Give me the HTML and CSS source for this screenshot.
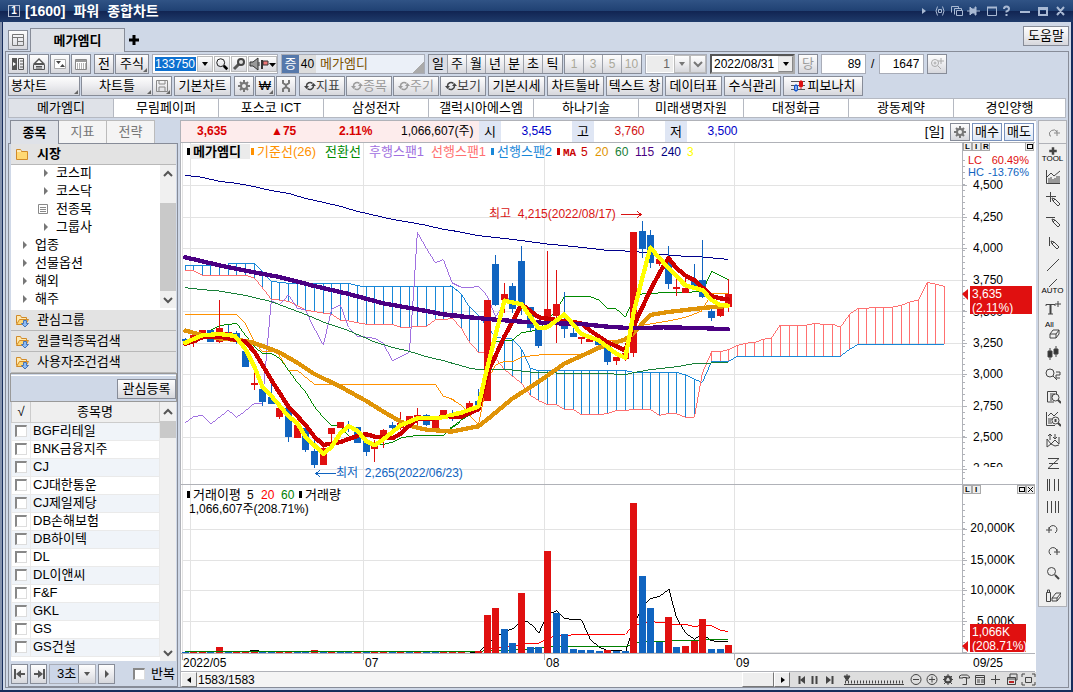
FILE: index.html
```html
<!DOCTYPE html>
<html lang="ko">
<head>
<meta charset="utf-8">
<title>[1600] 파워 종합차트</title>
<link rel="stylesheet" href="styles.css">
</head>
<body>
<svg class="defs" aria-hidden="true">
  <symbol id="gear" viewBox="0 0 14 14"><path d="M7 1v12M1 7h12M3 3l8 8M11 3l-8 8" stroke="currentColor" stroke-width="2"/><circle cx="7" cy="7" r="4" fill="currentColor"/><circle cx="7" cy="7" r="2" fill="#eee"/></symbol>
  <symbol id="cycle" viewBox="0 0 12 12"><path d="M2.500 6a3.500 3.500 0 0 1 6-2.500M9.500 6a3.500 3.500 0 0 1-6 2.500" fill="none" stroke="currentColor" stroke-width="1.500"/><path d="M0 6h5l-2.500 3zM7 6h5l-2.500-3z" fill="currentColor"/></symbol>
  <symbol id="folder" viewBox="0 0 14 14"><path d="M1.500 12.500v-10h4l1 2h6v8z" fill="#ffd873" stroke="#d18a28"/><path d="M2 4h4" stroke="#fff"/></symbol>
  <symbol id="folder-down" viewBox="0 0 14 14"><path d="M1.500 10.500v-8h4l1 2h5v3" fill="#ffe9b0" stroke="#d18a28"/><path d="M1.500 11.500l3-5h9l-3 5z" fill="#ffd873" stroke="#d18a28"/><path d="M8.500 7.500h3v3h2l-3.500 3.500-3.500-3.500h2z" fill="#8cbcf5" stroke="#4774b8"/></symbol>
  <symbol id="up" viewBox="0 0 10 10"><path d="M1 7l4-4 4 4" fill="none" stroke="currentColor" stroke-width="2"/></symbol>
  <symbol id="down" viewBox="0 0 10 10"><path d="M1 3l4 4 4-4" fill="none" stroke="currentColor" stroke-width="2"/></symbol>
  <symbol id="caret" viewBox="0 0 8 6"><path d="M1 1h6L4 5z" fill="currentColor"/></symbol>
  <symbol id="lens" viewBox="0 0 16 16"><circle cx="6.500" cy="6.500" r="4.500" fill="none" stroke="currentColor"/><path d="M10 10l4 4" stroke="currentColor" stroke-width="3"/></symbol>
</svg>
<div class="window">
  <header class="title">
    <span class="num">1</span><h1><span>[1600]</span> <span>파워</span> <span>종합차트</span></h1>
    <div class="caption">
      <svg width="152" height="16" viewBox="0 0 152 16" fill="none" stroke="#a9b9d3"><path d="M4 5l4 3-4 3z" fill="#a9b9d3" stroke="none"/><path d="M19.500 3.500q-3 4.500 0 9M24.500 3.500q3 4.500 0 9M20.500 6.500h3v3h-3z"/><path d="M33.500 9.500v-6h7v2M36.500 11.500v-6h7v2M38.500 7.500h6v5h-6z"/><path d="M52 4v8l2-2h3v2h1V4h-1v2h-3z" fill="#a9b9d3"/><path d="M49 8h3M58 8h4"/><path d="M69 4.500h10" stroke-width="2"/><path d="M69.500 5v7.500h9V5"/><path d="M86 6q0-2.500 2.500-2.500t2.500 2.500q0 1.500-2.500 2.500v1M88.500 11v2" stroke-width="2"/><path d="M102 9h10M121 5h8v7h-8zM121 6h8M139 4l7 8M146 4l-7 8" stroke-width="2"/></svg>
    </div>
  </header>
  <nav class="docs">
    <button class="btn sq" aria-label="화면 분할"><svg width="14" height="14" viewBox="0 0 14 14" fill="none" stroke="#777"><path d="M1.500 1.500h11v11h-11zM2 4.500h10M6.500 4v8M7 8.500h5"/></svg></button>
    <button class="doc">메가엠디</button>
    <button class="add" aria-label="추가"><svg width="10" height="10" viewBox="0 0 10 10"><path d="M5 0v10M0 5h10" stroke="#000" stroke-width="3"/></svg></button>
    <button class="btn help">도움말</button>
  </nav>
  <div class="work">
    <div class="bar">
      <div class="set">
        <button class="btn sq" aria-label="목록"><svg width="14" height="14" viewBox="0 0 14 14"><path d="M1 1h5v12H1z" fill="#555"/><path d="M2 5l3 2-3 2z" fill="#fff"/><path d="M7.500 1.500h5v11h-5zM9 4h3M9 7h3M9 10h3" fill="none" stroke="#555"/></svg></button>
        <button class="btn sq" aria-label="위로"><svg width="14" height="14" viewBox="0 0 14 14"><path d="M1 7l6-6 6 6z" fill="#555"/><path d="M4 6l3-3 3 3z" fill="#fff"/><path d="M1.500 7.500h11v5h-11zM4 9.500h6M4 11h6" fill="none" stroke="#555"/></svg></button>
        <button class="btn sq" aria-label="축소"><svg width="14" height="14" viewBox="0 0 14 14"><path d="M1.500 2.500h11v9h-11z" fill="#fff" stroke="#aaa"/><path d="M3 4h5L5.500 7zM7 10h5L9.500 7z" fill="#444"/></svg></button>
        <button class="btn sq" aria-label="표"><svg width="14" height="14" viewBox="0 0 14 14"><path d="M1.500 2.500h11v10h-11z" fill="#fff" stroke="#888"/><path d="M2 4h10" stroke="#999" stroke-width="2"/><path d="M3 7h9M3 9h9M3 11h9" stroke="#666" stroke-dasharray="1 1"/></svg></button>
      </div>
      <div class="set"><button class="btn sq">전</button><button class="btn w34 corner">주식</button></div>
      <div class="search">
        <input class="code" value="133750" aria-label="종목코드">
        <button class="btn mini" aria-label="펼치기"><svg width="8" height="6"><use href="#caret"/></svg></button>
        <button class="btn mini" aria-label="검색"><svg width="14" height="14"><use href="#lens"/></svg></button>
        <button class="btn mini" aria-label="도구"><svg width="14" height="14" viewBox="0 0 14 14"><path d="M2 12l5-5" stroke="#555" stroke-width="3"/><circle cx="9" cy="5" r="3" fill="#ddd" stroke="#444" stroke-width="2"/></svg></button>
        <button class="btn speak" aria-label="소리"><svg width="28" height="14" viewBox="0 0 28 14"><path d="M1 5h3l5-4v12l-5-4H1z" fill="#999" stroke="#333"/><path d="M10 5v4" stroke="#333"/><path d="M13 3v9" stroke="#333" stroke-width="2"/><path d="M14 4h5v4h-5z" fill="#e77" stroke="#333"/><path d="M20 6h7l-3.500 4z" fill="#000"/></svg></button>
      </div>
      <div class="stock"><b>증</b><i>40</i><span>메가엠디</span></div>
      <div class="join period"><button class="on">일</button><button>주</button><button>월</button><button>년</button><button>분</button><button>초</button><button>틱</button></div>
      <div class="join off"><button disabled>1</button><button disabled>3</button><button disabled>5</button><button disabled>10</button></div>
      <div class="unit"><input value="1" aria-label="단위" disabled><button class="btn" aria-label="단위 선택" disabled><svg width="8" height="6"><use href="#caret"/></svg></button><button class="btn" aria-label="더보기"><svg width="10" height="10"><use href="#down"/></svg></button></div>
      <div class="date"><select aria-label="날짜"><option>2022/08/31</option></select><span><svg width="8" height="6"><use href="#caret"/></svg></span></div>
      <button class="btn sq dim" disabled>당</button>
      <div class="count"><input value="89" aria-label="표시 봉수"><span>/</span><input value="1647" aria-label="전체 봉수"></div>
      <button class="btn sq dim" aria-label="확대"><svg width="14" height="14" viewBox="0 0 14 14" fill="none" stroke="#aaa"><circle cx="5" cy="6" r="3.500"/><circle cx="5" cy="6" r="1"/><path d="M8 9l3 3M11 1v6M8 4h6"/></svg></button>
    </div>
    <div class="bar two">
      <button class="btn w72 corner left">봉차트</button>
      <div class="pair"><button class="btn w72 corner">차트틀</button><button class="btn sq corner" aria-label="저장"><svg width="14" height="14" viewBox="0 0 14 14" fill="none" stroke="#888"><path d="M1.500 1.500h11v11h-11zM4 1v4h6v-4M4 13v-5h6v5"/></svg></button></div>
      <button class="btn w57">기본차트</button>
      <div class="set gap"><button class="btn sq" aria-label="설정"><svg class="gray" width="14" height="14"><use href="#gear"/></svg></button>
      <button class="btn sq corner">₩</button>
      <button class="btn sq" aria-label="공구"><svg width="12" height="14" viewBox="0 0 12 14" fill="none" stroke="#777" stroke-width="2"><path d="M3 1v3l3 2 3-2V1M3 13v-3l3-2 3 2v3M6 5v4"/></svg></button></div>
      <div class="set gap"><button class="btn w46"><svg width="12" height="12"><use href="#cycle"/></svg>지표</button>
      <button class="btn w46 dim"><svg width="12" height="12"><use href="#cycle"/></svg>종목</button>
      <button class="btn w46 dim"><svg width="12" height="12"><use href="#cycle"/></svg>주기</button>
      <button class="btn w46"><svg width="12" height="12"><use href="#cycle"/></svg>보기</button></div>
      <button class="btn w57">기본시세</button><button class="btn w57">차트툴바</button><button class="btn w57">텍스트 창</button><button class="btn w57">데이터표</button><button class="btn w57">수식관리</button>
      <button class="btn w80"><svg width="14" height="14" viewBox="0 0 14 14" fill="none"><path d="M0 2.500h14M0 6.500h14M0 10.500h14" stroke="#555"/><path d="M5 5v8M3.500 6.500h3v5h-3z" stroke="#15c" fill="#fff"/><path d="M10 1v9M8.500 2.500h3v5h-3z" stroke="#d11" fill="#d11"/></svg>피보나치</button>
    </div>
    <nav class="stocks"><button class="on">메가엠디</button><button>무림페이퍼</button><button>포스코 ICT</button><button>삼성전자</button><button>갤럭시아에스엠</button><button>하나기술</button><button>미래생명자원</button><button>대정화금</button><button>광동제약</button><button>경인양행</button></nav>
    <main class="main">
      <aside class="side">
        <nav class="tabs"><button class="on">종목</button><button>지표</button><button>전략</button></nav>
        <div class="panel">
          <button class="fold top"><svg width="14" height="14"><use href="#folder"/></svg>시장</button>
          <div class="tree">
            <ul>
              <li class="sub">코스피</li><li class="sub">코스닥</li><li class="sub page"><svg width="10" height="10" viewBox="0 0 10 10" fill="none" stroke="#888"><path d="M.5.5h9v9h-9zM2 3.500h6M2 5.500h6M2 7.500h6"/></svg>전종목</li><li class="sub">그룹사</li>
              <li>업종</li><li>선물옵션</li><li>해외</li><li>해주</li>
            </ul>
            <div class="scroll tall"><svg width="10" height="10"><use href="#up"/></svg><span></span><svg width="10" height="10"><use href="#down"/></svg></div>
          </div>
          <button class="fold"><svg width="14" height="14"><use href="#folder-down"/></svg>관심그룹</button>
          <button class="fold"><svg width="14" height="14"><use href="#folder-down"/></svg>원클릭종목검색</button>
          <button class="fold"><svg width="14" height="14"><use href="#folder-down"/></svg>사용자조건검색</button>
          <div class="reg"><button class="btn">관심등록</button></div>
          <div class="list">
            <table>
              <thead><tr><th class="ck">√</th><th>종목명</th></tr></thead>
              <tbody>
                <tr><td><input type="checkbox" id="s1"></td><td><label for="s1">BGF리테일</label></td></tr>
                <tr><td><input type="checkbox" id="s2"></td><td><label for="s2">BNK금융지주</label></td></tr>
                <tr><td><input type="checkbox" id="s3"></td><td><label for="s3">CJ</label></td></tr>
                <tr><td><input type="checkbox" id="s4"></td><td><label for="s4">CJ대한통운</label></td></tr>
                <tr><td><input type="checkbox" id="s5"></td><td><label for="s5">CJ제일제당</label></td></tr>
                <tr><td><input type="checkbox" id="s6"></td><td><label for="s6">DB손해보험</label></td></tr>
                <tr><td><input type="checkbox" id="s7"></td><td><label for="s7">DB하이텍</label></td></tr>
                <tr><td><input type="checkbox" id="s8"></td><td><label for="s8">DL</label></td></tr>
                <tr><td><input type="checkbox" id="s9"></td><td><label for="s9">DL이앤씨</label></td></tr>
                <tr><td><input type="checkbox" id="s10"></td><td><label for="s10">F&amp;F</label></td></tr>
                <tr><td><input type="checkbox" id="s11"></td><td><label for="s11">GKL</label></td></tr>
                <tr><td><input type="checkbox" id="s12"></td><td><label for="s12">GS</label></td></tr>
                <tr><td><input type="checkbox" id="s13"></td><td><label for="s13">GS건설</label></td></tr>
              </tbody>
            </table>
            <div class="scroll short"><svg width="10" height="10"><use href="#up"/></svg><span></span><svg width="10" height="10"><use href="#down"/></svg></div>
          </div>
          <div class="play">
            <button class="btn" aria-label="처음"><svg width="12" height="10" viewBox="0 0 12 10"><path d="M1 0v10M5 5h6" stroke="#555" stroke-width="2"/><path d="M2 5l5-4v8z" fill="#555"/></svg></button>
            <button class="btn" aria-label="끝"><svg width="12" height="10" viewBox="0 0 12 10"><path d="M11 0v10M1 5h6" stroke="#555" stroke-width="2"/><path d="M10 5L5 1v8z" fill="#555"/></svg></button>
            <div class="sec"><select aria-label="간격"><option>3초</option></select><span class="btn"><svg width="8" height="6"><use href="#caret"/></svg></span></div>
            <button class="btn next" aria-label="재생"><svg width="6" height="8" viewBox="0 0 6 8"><path d="M1 0l4 4-4 4z" fill="#555"/></svg></button>
            <label class="rep"><input type="checkbox">반복</label>
          </div>
        </div>
      </aside>
      <section class="chart">
        <div class="quote">
          <div class="pink"><b>3,635</b><b>▲75</b><b>2.11%</b><span>1,066,607(주)</span></div>
          <em>시</em><span class="val blue">3,545</span><em>고</em><span class="val red">3,760</span><em>저</em><span class="val blue">3,500</span>
          <div class="trade"><span>[일]</span><button class="btn sq gray" aria-label="차트 설정"><svg width="14" height="14"><use href="#gear"/></svg></button><button class="btn deal">매수</button><button class="btn deal">매도</button></div>
        </div>
        <svg class="plot" viewBox="181 142 854 530" preserveAspectRatio="xMinYMin meet" role="img" aria-label="메가엠디 일봉 차트">
          <g class="crisp" fill="none">
            <path class="grid" d="M182 185.500h780M182 217.500h780M182 248.500h780M182 280.500h780M182 311.500h780M182 343.500h780M182 374.500h780M182 406.500h780M182 437.500h780M182 469.500h780M182 529.500h780M182 560.500h780M182 590.500h780M182 621.500h780M182 652.500h780M182.500 143v510M190.500 143v510M363.500 143v510M544.500 143v510M734.500 143v510"/>
            <path class="axis" d="M181 142.500h854M181 484.500h854M181 653.500h854M181 671.500h854M962.500 142v511M182.500 654v6M363.500 654v6M544.500 654v6M734.500 654v6"/>
            <path class="axis" d="M963 185.500h4M963 217.500h4M963 248.500h4M963 280.500h4M963 311.500h4M963 343.500h4M963 374.500h4M963 406.500h4M963 437.500h4M963 469.500h4M963 529.500h4M963 560.500h4M963 590.500h4M963 621.500h4M963 652.500h4"/>
            <path class="axis ticks" stroke-width="2" d="M964 160v320M964 504v148"/>
          </g>
          <g transform="translate(180 140) scale(.333333)" class="thin">
            <path class="s2" d="M16 377V391M41 377V392M67 377V406M92 377V406M118 377V406M145 370V406M170 370V406M196 370V406M223 370V414M247 395V443M274 424V478M298 427V480M325 430V484M352 430V497M376 430V510M403 430V515M430 430V519M455 430V523M481 430V540M506 430V543M532 437V548M559 440V553M584 440V553M610 440V553M637 440V553M662 440V562M688 440V562M712 440V559M739 440V559M766 440V540M790 440V538M817 440V536"/>
            <path class="s2" d="M16 377H145V370H223L247 395 274 424 325 430H506L532 437 559 440H817L840 458"/>
            <path class="s1" d="M16 391L41 392 67 406H196L223 414 247 443 274 478 298 480 325 484 352 497 376 510 430 519 455 523 481 540 506 543 559 553H637L662 562H688L712 559H739L766 540 817 536 840 560"/>
            <path class="lag" d="M16 848L41 830 67 826 92 852 118 832 145 811 170 832 196 813 223 790 247 792 260 640 274 481 298 495 325 465 352 504 376 510 403 565 430 615 455 508 481 495 506 562 532 588 584 595 610 610 637 663 688 637 702 440 712 277 739 325 766 368 790 359 817 430 840 440"/>
            <path class="base" d="M16 523H170L196 550 223 605 247 634H290L325 691H352L403 733H766L790 769 817 777 840 794"/>
            <path class="conv" d="M92 570L118 557 170 550 196 585 223 620 247 640H274L300 656 325 690 352 727 376 755 403 800 430 832 455 856 481 857 506 888 532 889 559 905 584 915 610 913 637 907 664 893 712 886H790L817 862 840 848"/>
            <path class="m60" d="M16 443L67 449 118 453 196 466 274 485 325 504 376 523 430 546 506 572 584 606 637 622 688 634 739 650 790 662 840 676"/>
            <path class="m240" d="M16 106L67 112 118 124 170 130 223 140 274 152 325 160 376 175 430 187 481 199 532 214 584 226 637 238 690 247 739 256 790 268 840 276"/>
            <path class="rw" d="M41 575V620M118 480V610M223 690V750M298 795V838M430 905V975M455 864V910M584 900V966M610 868V925M662 816V870M712 804V860M766 840V867"/>
            <path class="rb" d="M41 585V610M67 570V592M118 564V605M145 576V592M223 730V735M298 804V831M352 856V894M430 924V975M455 864V882M481 846V864M584 915V927M610 870V900M662 850V865M688 828V850M712 825V835M766 840V864M790 810V835"/>
            <path class="bw" d="M16 594V606M145 556V590M170 572V612M196 620V681M247 740V798M274 725V792M325 800V906M376 864V936M403 897V984M506 843V875M559 900V948M637 846V875M739 822V858M817 810V842"/>
            <path class="bb" d="M16 597V603M92 569V605M170 580V605M196 633V681M247 747V786M274 770V792M325 804V891M376 864V930M403 933V975M506 860V866M532 861V909M559 900V936M637 855V864M739 825V856M817 820V830"/>
          </g>
          <g transform="translate(450 140) scale(.333333)" class="thin">
            <path class="s2" d="M8 440V536M34 463V565M58 500V606M85 525V636M163 597V688M187 597V708M215 628V730M241 685V766M266 692V782M292 692V794M319 692V794M343 692V808M370 692V808M394 692V824M420 692V824M446 692V824M472 692V821M499 692V812M526 692V812M550 697V808M578 697V808M601 697V808M628 697V826M655 697V821M680 697V821M707 705V832M733 718V832"/>
            <path class="s1" d="M785 664V635M812 664V634M836 664V629"/>
            <path class="s2" d="M0 437L8 440 34 463 58 500 85 525 112 562 137 590 163 597H187L215 628 241 685 266 692H526L550 697H680L707 705 733 718 757 727 785 664H836"/>
            <path class="s1" d="M0 533L8 536 34 565 58 606 85 636 112 640 137 655 163 688 187 708 215 730 241 766 266 782 292 794H319L343 808H370L394 824H446L472 821 499 812H526L550 808H601L628 826 655 821H680L707 832H733L757 700 785 635"/>
            <path class="lag" d="M0 415L8 428 34 442 58 444 85 438 112 468 137 530 163 490 187 465"/>
            <path class="base" d="M0 775L34 796 85 855 112 720 137 675 163 664H190L215 651 266 645 400 643 472 602H520L550 570 578 553 601 552 655 543 707 532 755 513 785 460H834"/>
            <path class="conv" d="M0 865L34 840 85 810 112 640 137 604 187 600 215 578 266 570 319 510 343 470H421L446 480 472 505 499 507 526 531 550 480 578 460 670 458 757 455 785 394 834 418"/>
            <path class="m60" d="M0 668L58 684 85 689 187 690 240 696 342 700 472 701 526 704 550 698 601 689 680 680 733 671 785 669 834 667"/>
            <path class="m240" d="M0 270L85 287 187 298 292 312 394 322 472 331 550 334 628 343 707 349 757 351 834 358"/>
            <path class="rw" d="M58 783V810M163 429V520M292 333V560M319 390V609M394 590V612M499 650V675M526 640V662M550 276V651M628 357V378M680 414V467M707 415V459M812 495V531M836 417V516"/>
            <path class="rb" d="M34 812V830M58 789V810M112 480V783M163 462V480M292 507V545M319 492V528M394 591V597M420 597V606M499 651V663M526 640V657M550 276V639M628 357V372M680 441V446M707 444V459M812 505V528M836 462V501"/>
            <path class="bw" d="M8 810V842M85 747V800M137 345V498M187 429V520M215 318V525M241 500V573M266 560V624M343 456V594M370 565V591M472 610V675M578 243V354M601 270V384M655 318V447M733 372V440M757 300V474M785 505V543"/>
            <path class="bb" d="M85 783V796M137 372V495M187 438V507M215 363V495M241 500V564M266 560V618M343 540V567M370 579V591M446 595V615M472 610V666M578 273V327M601 285V369M655 360V432M733 420V440M757 420V471M785 513V534"/>
          </g>
          <g transform="translate(690 230) scale(.333333)" class="thin">
            <path class="s1" d="M142 379V346M166 379V340M193 379V337M220 379V328M244 379V324M271 379V286M298 379V287M322 379V287M349 379V287M373 379V280M400 379V283M427 379V283M451 379V292M479 357V252M505 343V235M529 343V235M556 343V234M580 343V233M607 343V232M634 343V226M658 343V216M685 343V210M712 343V157M736 343V163M763 343V169"/>
            <path class="s1" d="M64 364H95L118 358 142 346 166 340 195 337 220 328 245 324 270 286H348L374 280 400 283H430L451 292 480 252 505 235 605 232 635 226 660 216 685 210 712 157 740 163 763 169"/>
            <path class="s2" d="M115 394L142 379H451L480 357 505 343H763"/>
          </g>
          <g class="thick">
            <g transform="translate(180 140) scale(.333333)">
              <path class="m20" d="M16 572L67 585 118 595 200 603 240 615 298 637 352 668 403 702 481 740 559 783 610 815 662 845 700 860 739 869 780 872 810 874"/>
              <path class="m5" d="M16 612L67 592 118 590 196 605 223 635 250 680 274 720 325 800 376 854 403 890 430 915 481 906 506 897 540 885 560 883 584 890 637 895 664 880 690 855 712 838 766 835 840 822"/>
              <path class="m3" d="M16 608L67 586 118 582 165 588 196 627 223 680 247 740 274 768 325 828 352 850 376 890 430 942 455 920 481 880 506 858 532 872 559 904 584 916 610 898 662 856 712 835 766 835 800 830 840 818"/>
              <path class="m115" d="M16 352L118 376 196 392 298 411 403 438 506 462 610 490 712 508 790 523 840 528"/>
            </g>
            <g transform="translate(450 140) scale(.333333)">
              <path class="m20" d="M0 876L85 859 112 838 187 776 266 725 343 671 446 624 526 598 550 580 601 525 655 516 757 504 830 498"/>
              <path class="m5" d="M0 830H34L85 808 112 700 163 590 215 493 266 532 320 540 394 550 421 572 472 606 526 632 550 560 601 450 628 400 655 354 680 385 707 407 733 420 785 468 810 475 834 478"/>
              <path class="m115" d="M0 526L112 537 215 545 292 549 394 552 472 560 550 565 640 562 750 564 834 568"/>
              <path class="m3" d="M0 826L34 818 85 800 110 690 163 482 215 493 266 565 292 562 343 523 394 582 446 601 500 642 526 653 540 580 550 522 578 410 601 323 655 384 707 437 757 450 785 480 810 495 834 497"/>
            </g>
          </g>
          <g transform="translate(180 480) scale(.333333)" class="thin">
            <path class="rb" d="M41 514V519M67 514V519M118 501V519M170 514V519M196 514V519M223 514V519M298 514V519M325 514V519M403 510V519M455 514V519M532 515V519M584 515V519M610 514V519M662 514V519M712 514V519M790 514V519M817 514V519M844 514V519"/>
            <path class="bb" d="M16 516V519M92 515V519M145 515V519M247 515V519M274 515V519M352 515V519M376 515V519M430 515V519M481 515V519M506 515V519M559 515V519M637 515V519M688 515V519M739 515V519M766 515V519"/>
            <path stroke="#008000" d="M16 515H870"/><path stroke="#000" d="M210 511H237"/>
          </g>
          <g transform="translate(470 480) scale(.333333)" class="thin">
            <path stroke="#000" d="M0 518L28 515 52 490 90 463 103 455 127 447 154 425 172 424 185 435 207 458 232 405 259 392 283 414 300 418 334 419 361 478 388 502 412 511 455 513 467 515 490 440 505 405 530 367 541 356 568 349 597 328 619 412 646 458 673 478 697 462 724 482 751 485H773"/>
            <path stroke="#f00" d="M52 507L85 502 142 497 160 490H205L232 475 259 467 283 466 348 463H466L490 437 517 431 541 425 580 428 610 433 650 434 673 440 697 436 724 437 751 450 773 455"/>
            <path stroke="#008000" d="M0 515L60 512 127 511 181 506 215 504 259 499H470L490 491 517 486 568 485 600 481 700 480 773 478"/>
            <path class="rb" d="M25 514V519M52 405V519M76 384V519M154 339V519M232 213V519M412 510V519M490 69V519M595 411V519M646 498V519M673 483V519M697 417V519M775 495V519"/>
            <path class="bb" d="M103 447V519M127 489V519M181 501V519M205 501V519M259 399V519M283 462V519M310 507V519M334 510V519M361 510V519M388 513V519M439 513V519M466 514V519M517 288V519M541 384V519M568 486V519M619 501V519M724 507V519M751 507V519"/>
          </g>
          <g class="ko">
            <rect x="190" y="144" width="60" height="15" fill="#ebebeb"/><rect x="187" y="148" width="3" height="7"/><text x="193" y="156" font-weight="700">메가엠디</text>
            <g fill="#ff9100"><rect x="251" y="148" width="3" height="7"/><text x="257" y="156">기준선(26)</text></g>
            <text x="325" y="156" fill="#008a00">전환선</text><text x="369" y="156" fill="#a070e0">후행스팬1</text><text x="431" y="156" fill="#ff7070">선행스팬1</text>
            <g fill="#1887d8"><rect x="491" y="148" width="3" height="7"/><text x="497" y="156">선행스팬2</text></g>
            <rect x="187" y="491" width="3" height="7"/><text x="193" y="499">거래이평</text><rect x="299" y="491" width="3" height="7"/><text x="305" y="499">거래량</text>
          </g>
          <g class="en">
            <g fill="#c80000"><rect x="557" y="148" width="3" height="7"/><text x="563" y="156" class="ma">MA</text><text x="581" y="156">5</text></g>
            <text x="595" y="156" fill="#e09400">20</text><text x="615" y="156" fill="#188038">60</text><text x="635" y="156" fill="#4b0082">115</text><text x="661" y="156" fill="#000080">240</text><text x="687" y="156" fill="#ff0">3</text>
            <text x="247" y="499">5</text><text x="261" y="499" fill="#f00">20</text><text x="281" y="499" fill="#008000">60</text>
            <text x="189" y="513">1,066,607주(208.71%)</text>
            <text x="489" y="218" fill="#d81313">최고&#160; 4,215(2022/08/17)</text>
            <text x="336" y="477" fill="#1064c0">최저&#160; 2,265(2022/06/23)</text>
            <text x="183" y="667">2022/05</text><text x="365" y="667">07</text><text x="546" y="667">08</text><text x="736" y="667">09</text><text x="973" y="667">09/25</text>
            <text x="968" y="164" class="pct" fill="#e01010">LC</text><text x="968" y="176" class="pct" fill="#1064c0">HC</text><text x="1029" y="164" class="pct" fill="#e01010" text-anchor="end">60.49%</text><text x="1029" y="176" class="pct" fill="#1064c0" text-anchor="end">-13.76%</text>
            <text x="973" y="189">4,500</text><text x="973" y="221">4,250</text><text x="973" y="252">4,000</text><text x="973" y="284">3,750</text><text x="973" y="316">3,500</text><text x="973" y="347">3,250</text><text x="973" y="378">3,000</text><text x="973" y="410">2,750</text><text x="973" y="441">2,500</text><text x="973" y="472">2,250</text>
            <rect x="969" y="467" width="60" height="8" fill="#fff"/>
            <text x="1015" y="532" text-anchor="end">20,000K</text><text x="1015" y="564" text-anchor="end">15,000K</text><text x="1015" y="594" text-anchor="end">10,000K</text><text x="1015" y="625" text-anchor="end">5,000K</text>
            <rect x="970" y="286" width="62" height="28" fill="#e01010"/><rect x="970" y="624" width="56" height="28" fill="#e01010"/><path d="M962 294l6-5v11zM962 646l6-5v11z" fill="#e01010"/>
            <g fill="#fff"><text x="972" y="298">3,635</text><text x="972" y="312">(2.11%)</text><text x="972" y="636">1,066K</text><text x="972" y="650">(208.71%)</text></g>
          </g>
          <g fill="none" class="crisp"><path stroke="#d81313" d="M621 214.500h20M637 211l4 3.500-4 3.500"/><path stroke="#1064c0" d="M316 473.500h20M320 470l-4 3.500 4 3.500"/></g>
          <g class="corner-keys"><path d="M963.500 142.500h8v8h-8zM972.500 142.500h8v8h-8zM981.500 142.500h8v8h-8zM1025.500 142.500h8v8h-8zM963.500 485.500h8v8h-8zM972.500 485.500h8v8h-8zM1017.500 485.500h8v8h-8zM1026.500 485.500h8v8h-8z" fill="#eee" stroke="#aaa"/><text x="965" y="149">L</text><text x="975" y="149">I</text><text x="983" y="149">R</text><text x="965" y="492">L</text><text x="975" y="492">I</text><path d="M1027.500 144.500h5v4h-5zM1019.500 487.500h5v4h-5zM1028 487l5 5M1033 487l-5 5" fill="none" stroke="#000"/></g>
        </svg>
        <div class="foot">
          <button class="key" aria-label="왼쪽"><svg width="5" height="6" viewBox="0 0 5 6"><path d="M4 0v6L0 3z"/></svg></button><span>1583/1583</span>
          <button class="key thumb" aria-label="이동"></button><button class="key" aria-label="오른쪽"><svg width="5" height="6" viewBox="0 0 5 6"><path d="M1 0v6l4-3z"/></svg></button>
          <svg class="tools" width="246" height="15" viewBox="789 672 246 15" fill="none" stroke="#444">
            <path d="M798.500 676v8M811.500 676v8M815.500 676v8M831.500 676v8" stroke-width="2"/><path d="M804 676v8l-5-4zM825 676v8l5-4z" fill="#444" stroke="none"/>
            <path d="M843 684.500h60M846 674v3"/><path d="M844 682h58" stroke-width="3" stroke-dasharray="1 2"/><path d="M843 676h6l-3 5z" fill="#444"/>
            <circle cx="915" cy="679.500" r="5"/><path d="M912 679.500h6"/><circle cx="931" cy="679.500" r="5"/><path d="M928 679.500h6M931 676.500v6"/>
            <circle cx="947" cy="679.500" r="3" stroke-width="2"/><path d="M947 674v11M942 679.500h10M943 676l8 8M951 676l-8 8"/><circle cx="947" cy="679.500" r="1.500" fill="#ddd" stroke="none"/>
            <path d="M958.500 678v-2l2-1h6l2 2v1h-4M961.500 677.500h4v7h-4M958 678h4"/><path d="M974.500 675.500h9v9h-9zM974 677.500h10M976 680h3M980 680h3M976 682h3M980 682h3"/><path d="M994.500 675v9M990 679.500h9"/><path d="M1009 677v-3h7v6h-2M1006.500 677.500h8v7h-8zM1007 679h7"/><path d="M1008 682h5" stroke="#b22" stroke-width="2"/>
            <path d="M1024.500 677.500h6v5h-6zM1021 677v-3h3M1031 674h3v3M1034 682v3h-3M1024 685h-3v-3"/>
          </svg>
        </div>
      </section>
      <nav class="draw">
        <button aria-label="다시"><svg viewBox="0 0 16 16"><path d="M6 12H5a4 4 0 1 1 7-4M9 9h6M12 6v6" stroke="#888"/></svg></button>
        <button class="txt"><svg width="8" height="6" viewBox="0 0 8 6"><path d="M4 0v6M1 3h6" stroke-width="2"/></svg>TOOL</button>
        <button aria-label="지표"><svg viewBox="0 0 16 16"><path d="M1.500 1v13.500H15M2 8l4-4 3 3 6-5M4 14V9M6 14V8M8 14v-4M10 14V9M12 14V7M14 14V7"/></svg></button>
        <button aria-label="십자선"><svg viewBox="0 0 16 16"><path d="M5.500 1v10M1 5.500h10M7 7l3 1 5 5-2 2-5-5zM8 10l2-2"/></svg></button>
        <button aria-label="수평선"><svg viewBox="0 0 16 16"><path d="M1 4.500h9M7 6l3 1 5 5-2 2-5-5zM8 9l2-2"/></svg></button>
        <button aria-label="수직선"><svg viewBox="0 0 16 16"><path d="M4.500 2v9M6 6l3 1 5 5-2 2-5-5zM7 9l2-2"/></svg></button>
        <button aria-label="추세선"><svg viewBox="0 0 16 16"><path d="M2 14L14 2"/></svg></button>
        <button class="txt"><svg width="10" height="8" viewBox="0 0 10 8"><path d="M1 8l8-8"/></svg>AUTO</button>
        <button aria-label="문자"><svg viewBox="0 0 16 16"><path d="M1 5V3.500h9V5M3 13h5"/><path d="M5.500 3v10" stroke-width="2"/><path d="M13 0v6M10 3h6"/></svg></button>
        <button class="all" aria-label="모두 지우기"><small>All</small><svg viewBox="0 0 16 16"><path d="M5 11l3-4h6l-3 4zM5 11v4h6v-4M11 15l3-4V7"/></svg></button>
        <button aria-label="봉"><svg viewBox="0 0 16 16"><path d="M5 3v12M11 1v11"/><path d="M3 6h4v6H3zM9 4h4v5H9z" fill="#333"/></svg></button>
        <button aria-label="찾기"><svg viewBox="0 0 16 16"><circle cx="5" cy="6" r="4"/><path d="M8 9l4 4M11 5h4v3h-4v3h4"/></svg></button>
        <button aria-label="문서 찾기"><svg viewBox="0 0 16 16"><path d="M9 13H2.500V2.500h9V5M5 5h5M5 7h3M5 9h2M5 11h2"/><circle cx="10.500" cy="8.500" r="3.500"/><path d="M13 11l3 3" stroke-width="2"/></svg></button>
        <button aria-label="차트 찾기"><svg viewBox="0 0 16 16"><path d="M1.500 1v13.500H10M3 5l3-3 3 3 4-4M3 8h4M3 10h3M3 12h4"/><circle cx="10.500" cy="9.500" r="3.500"/><path d="M10.500 8v3M13 12l3 3" stroke-width="2"/></svg></button>
        <button aria-label="패턴"><svg viewBox="0 0 16 16"><path d="M2 14V6l4 5 4-4 4 4V4M2 14l4-3 4 2 4-1M5 7V1M3 3l2-2 2 2M10 1v5M8 4l2 2 2-2"/></svg></button>
        <button aria-label="지그재그"><svg viewBox="0 0 16 16"><path d="M3 3.500h11L3 13.500h11M4 8.500h9"/></svg></button>
        <button aria-label="시간선"><svg viewBox="0 0 16 16"><path d="M2.500 2v12M4.500 2v12M9.500 2v12M13.500 2v12"/></svg></button>
        <button aria-label="등간격선"><svg viewBox="0 0 16 16"><path d="M2.500 2v12M6.500 2v12M10.500 2v12M13.500 2v12"/></svg></button>
        <button aria-label="되돌리기"><svg viewBox="0 0 16 16"><path d="M10 12a4 4 0 1 0-6-4M1 9h6M4 6v6"/></svg></button>
        <button aria-label="다시 실행"><svg viewBox="0 0 16 16"><path d="M6 12a4 4 0 1 1 6-4M9 9h6M12 6v6"/></svg></button>
        <button aria-label="확대"><svg viewBox="0 0 16 16"><circle cx="6.500" cy="6.500" r="4"/><path d="M10 10l4 4" stroke-width="2"/></svg></button>
        <button aria-label="지우개"><svg viewBox="0 0 16 16"><path d="M1.500 5.500h4v9h-4zM2.500 5V3h2v2M7 11l4-5h5l-4 5zM7 11v3h5v-3M12 14l4-5V6"/></svg></button>
      </nav>
    </main>
  </div>
</div>
</body>
</html>
```
FILE: styles.css
```css
* { box-sizing: border-box; }
body { margin: 0; font: 13px/16px "Liberation Sans", "Noto Sans CJK KR", sans-serif; color: #000; background: #cfd8e7; }
button, input, select { font: inherit; color: inherit; margin: 0; padding: 0; border-radius: 0; }
button { display: flex; align-items: center; justify-content: center; white-space: nowrap; border: 0; background: none; }
svg { display: block; flex: none; }
.defs { position: absolute; width: 0; height: 0; }
.window { display: flex; flex-direction: column; height: 100vh; min-height: 692px; padding: 0 4px 2px 5px; border-bottom: 2px solid #172d5c; box-shadow: inset 2px 0 #8794ae, inset 3px 0 #172d5c, inset -2px 0 #172d5c; }

.title { display: flex; align-items: center; flex: none; height: 22px; margin: 0 -4px 0 -5px; padding: 0 3px 0 8px; gap: 5px; color: #fff; background: linear-gradient(#305385, #204173 50%, #112452 50%, #1f3b6b); }
.title h1 { display: flex; gap: 8px; margin: 0; font-size: 14px; font-weight: 700; }
.num { width: 12px; height: 12px; border: 1px solid #b5c0d4; font-size: 10px; line-height: 10px; font-weight: 700; text-align: center; }
.caption { margin-left: auto; }

.btn { position: relative; flex: none; height: 20px; border: 1px solid #878c98; background: linear-gradient(#fdfdfd, #ececef 50%, #d6d7dc); }
.sq { width: 20px; }
.dim { color: #9b9b9b; }
.gray { color: #777; }
.btn.corner::after { content: ""; position: absolute; right: 1px; bottom: 1px; border: 2px solid #666; border-top-color: transparent; border-left-color: transparent; }
.w34 { width: 34px; }
.w46 { width: 46px; color: #444; }
.w46.dim { color: #9b9b9b; }
.w57 { width: 57px; }
.w72 { width: 72px; }
.w80 { width: 80px; gap: 3px; }
.left { justify-content: flex-start; padding-left: 2px; }

.docs { display: flex; align-items: center; flex: none; height: 29px; padding: 6px 0 0 3px; }
.doc { align-self: stretch; width: 95px; margin: 0 0 -1px 2px; border: 1px solid #878c98; border-bottom: 0; background: #dfe2e8; font-weight: 700; z-index: 1; }
.add { width: 18px; height: 20px; }
.help { width: 46px; margin: -7px 0 0 auto; }

.work { display: flex; flex-direction: column; flex: 1; gap: 2px; min-height: 0; padding: 2px 1px 0 2px; border: 1px solid #878c98; }
.bar { display: flex; flex: none; height: 20px; gap: 3px; font-size: 13px; }
.bar.two { gap: 2px; }
.set { display: flex; gap: 1px; }
.pair { display: flex; margin-left: -1px; }
.pair .sq { margin-left: -1px; }
.set.gap { gap: 1px; margin-left: 1px; }
.search { display: flex; align-items: center; width: 126px; padding: 0 1px; border: 1px solid #a9adb8; background: #fff; font-size: 12px; }
.code { flex: none; width: 41px; height: 14px; margin: 0 1px; border: 0; background: #0d70d0; color: #fff; }
.mini { width: 16px; height: 16px; margin-right: 1px; border-color: #bbb; }
.speak { width: 29px; height: 16px; border-color: #bbb; }
.stock { display: flex; width: 144px; border: 1px solid #a9adb8; background: linear-gradient(135deg, #ebf0f8 93%, #aaa 93%); color: #7c5200; line-height: 18px; font-size: 13px; }
.stock b { width: 17px; color: #fff; background: #5578ab; font-weight: 400; text-align: center; }
.stock i { width: 17px; color: #000; background: #ddd; font-style: normal; font-size: 12px; text-align: center; }
.stock span { padding-left: 4px; }
.join { display: flex; border: 1px solid #878c98; }
.join button { width: 19px; border-right: 1px solid #9da1aa; background: linear-gradient(#fdfdfd, #ececef 50%, #d6d7dc); }
.join button:last-child { border-right: 0; }
.join .on { background: #dadde5; }
.join.off { margin-left: -2px; }
.join.off button { width: 19px; color: #aaa89a; font-size: 12px; }
.unit { display: flex; width: 62px; border: 1px solid #a9adb8; background: #fff; font-size: 12px; }
.unit input { flex: 1; min-width: 0; margin: 1px; padding-right: 3px; border: 0; background: #ececec; color: #666; text-align: right; }
.unit .btn { width: 16px; height: 18px; border-color: #bbb; color: #777; }
.date { position: relative; width: 85px; border: 2px inset #aaa; background: #fff; font-size: 12px; }
.date select, .sec select { width: 100%; height: 16px; padding-left: 2px; border: 0; appearance: none; background: none; }
.date span { position: absolute; right: 0; top: 0; display: grid; place-items: center; width: 15px; height: 16px; border: 1px outset #ddd; background: #eee; pointer-events: none; }
.count { display: flex; gap: 5px; line-height: 20px; font-size: 12px; }
.count input { width: 45px; padding-right: 4px; border: 1px solid #a9adb8; background: #fff; text-align: right; }

.stocks { display: grid; grid-template-columns: repeat(9, 105fr) 111fr; flex: none; height: 20px; margin-right: 1px; border: 1px solid #b5b9c2; background: #fff; }
.stocks button { border-right: 1px solid #b5b9c2; }
.stocks button:last-child { border-right: 0; }
.stocks .on { background: #dfe2e8; }

.main { display: grid; grid-template-columns: 170px 1fr 29px; grid-template-rows: minmax(0, 1fr); flex: 1; gap: 2px; min-height: 0; }
.side, .chart, .panel { display: flex; flex-direction: column; min-width: 0; min-height: 0; }
.tabs { display: flex; flex: none; height: 23px; padding-left: 2px; }
.tabs button { width: 48px; border: 1px solid #bbb; border-bottom: 0; border-left: 0; background: #f4f4f4; color: #777; }
.tabs .on { width: 49px; margin-bottom: -1px; border: 1px solid #878c98; border-bottom: 0; background: #dfe2e8; color: #000; font-weight: 700; z-index: 1; }
.panel { flex: 1; border: 1px solid #878c98; padding: 0 1px 0 2px; }
.fold { flex: none; justify-content: flex-start; gap: 8px; height: 20px; margin-bottom: 1px; padding: 0 4px; background: #e3e3e3; box-shadow: 0 1px #b8b8b8; }
.fold.top { margin-bottom: 0; font-weight: 700; z-index: 1; }
.tree { display: flex; flex: none; height: 146px; padding-bottom: 2px; background: #fff; }
.tree ul { flex: 1; margin: 0; padding: 0; list-style: none; line-height: 18px; }
.tree li { display: flex; align-items: center; height: 18px; padding-left: 12px; gap: 8px; }
.tree li::before { content: ""; border: 4px solid transparent; border-left-color: #777; border-right: 0; }
.tree .sub { padding-left: 33px; }
.tree .page { padding-left: 27px; }
.tree .page::before { display: none; }
.scroll { display: flex; flex-direction: column; align-items: center; flex: none; width: 16px; padding: 5px 0 3px; background: #f0f0f0; color: #555; }
.scroll span { width: 16px; background: #c9c9c9; }
.scroll svg:last-child { margin-top: auto; }
.tall span { height: 88px; margin-top: 24px; }
.short span { height: 17px; margin-top: 4px; }
.reg { display: flex; justify-content: flex-end; flex: none; height: 29px; margin: 0 -1px; padding: 3px 1px 0; border-top: 3px double #fff; outline: 1px solid #999; outline-offset: -1px; }
.reg .btn { width: 59px; }
.list { display: flex; flex: none; height: 259px; overflow: hidden; background: #fff; }
table { flex: 1; align-self: flex-start; border-collapse: collapse; }
th { height: 20px; padding: 0; border: 1px solid #ccc; border-top: 0; background: #efefef; font-weight: 400; }
.ck { width: 19px; }
td { height: 18px; padding: 0; border: 1px solid #eaeaea; line-height: 16px; }
td:first-child { padding-left: 3px; }
td:last-child { padding-left: 2px; }
tbody tr:nth-child(odd) { background: #f0f4f9; }
input[type="checkbox"] { display: block; width: 12px; height: 12px; appearance: none; border: 1px solid #ddd; border-top: 2px solid #888; border-left: 2px solid #888; background: #fff; }
.play { display: flex; align-items: center; flex: 1; gap: 2px; }
.play .btn { width: 17px; color: #555; }
.sec { position: relative; display: flex; border: 1px solid #a9adb8; background: #ccd6e8; }
.sec select { width: 28px; height: 18px; padding-left: 7px; }
.sec .btn { display: grid; place-items: center; height: 18px; border-width: 0 0 0 1px; }
.rep { display: flex; align-items: center; gap: 6px; margin-left: auto; padding-right: 1px; }

.chart { border-left: 1px solid #b0b2b8; background: #fff; }
.quote { display: flex; flex: none; height: 22px; border-top: 1px solid #b0b2b8; line-height: 21px; font-size: 12px; }
.pink { display: grid; grid-template-columns: 74px 54px 62px 1fr; width: 298px; padding-left: 16px; background: #fdecec; }
.pink b { color: #d80000; }
.pink b:nth-child(3) { padding-left: 14px; }
.pink span { padding-left: 14px; }
.quote em { width: 22px; background: #dfe6f4; font-style: normal; font-size: 13px; text-align: center; }
.val { width: 71px; text-align: center; }
.blue { color: #0000c8; }
.red { color: #d01010; }
.trade { display: flex; align-items: center; gap: 2px; margin-left: auto; padding-right: 2px; font-size: 13px; }
.trade span { padding-right: 4px; }
.deal { width: 30px; height: 18px; border-color: #7992bd; background: linear-gradient(#fff, #dde7f6); }
.trade .sq { height: 18px; }
.plot { flex: 1; width: 100%; min-height: 0; }
.crisp, .thin, .thick, .corner-keys path { shape-rendering: crispEdges; }
.grid { stroke: #e3e3e3; }
.axis { stroke: #b0b2b8; }
.ticks { stroke-dasharray: 1 5; }
.thin path { fill: none; stroke-width: 3; }
.thick path { fill: none; stroke-width: 13; stroke-linecap: round; stroke-linejoin: round; }
.s1 { stroke: #ff7070; }
.s2 { stroke: #1887d8; }
.lag { stroke: #a070e0; }
.base { stroke: #ff9100; }
.conv { stroke: #008a00; }
.m60 { stroke: #188038; }
.m240 { stroke: #00008c; }
.m20 { stroke: #e09408; }
.m5 { stroke: #cc0000; }
.m3 { stroke: #ffff00; }
.m115 { stroke: #4b0082; }
.rw, .rb { stroke: #e01010; }
.bw, .bb { stroke: #1064c0; }
.thin .rb, .thin .bb { stroke-width: 21; }
.ko { font-size: 13px; }
.en { font-size: 12px; }
.pct { font-size: 11px; }
.ma { font-family: "Liberation Mono", monospace; font-size: 11px; font-weight: 700; }
.corner-keys { font-size: 8px; font-weight: 700; }

.foot { display: flex; align-items: center; flex: none; height: 15px; background: #f4f4f4; font-size: 12px; }
.key { width: 16px; height: 15px; border: 1px solid #fff; border-right-color: #777; border-bottom-color: #777; background: #eee; }
.foot span { flex: 1; padding-left: 1px; }
.thumb { width: 32px; }
.tools { background: #dedede; }
.draw { display: flex; flex-direction: column; align-self: start; border: 1px solid #b0b2b8; background: #efefef; }
.draw button { flex-direction: column; height: 22px; }
.draw button:first-child { height: 23px; border-bottom: 1px solid #b0b2b8; }
.draw svg { width: 16px; height: 16px; fill: none; stroke: #444; }
.draw .txt { font-size: 8px; line-height: 8px; }
.draw .txt svg { width: 10px; height: 8px; }
.all { position: relative; }
.all small { position: absolute; left: 6px; top: 1px; font-size: 8px; line-height: 8px; }
```
